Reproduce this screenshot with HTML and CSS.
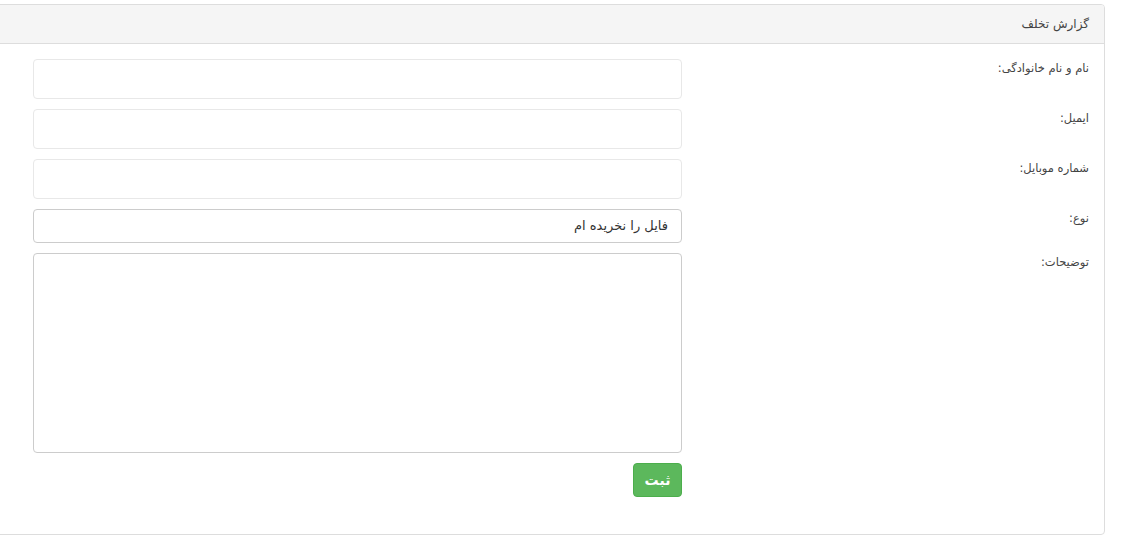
FILE: index.html
```html
<!DOCTYPE html>
<html lang="fa" dir="rtl">
<head>
<meta charset="utf-8">
<title>گزارش تخلف</title>
<link rel="stylesheet" href="styles.css">
</head>
<body>
<div class="panel">
  <div class="panel-heading">گزارش تخلف</div>
  <div class="panel-body">
    <form class="form">
      <label class="label">نام و نام خانوادگی:</label>
      <div class="control"><input class="input" type="text"></div>

      <label class="label">ایمیل:</label>
      <div class="control"><input class="input" type="text"></div>

      <label class="label">شماره موبایل:</label>
      <div class="control"><input class="input" type="text"></div>

      <label class="label">نوع:</label>
      <div class="control"><div class="select">فایل را نخریده ام</div></div>

      <label class="label">توضیحات:</label>
      <div class="control"><textarea class="textarea"></textarea></div>

      <div class="spacer"></div>
      <div class="control actions"><button class="btn" type="button">ثبت</button></div>
    </form>
  </div>
</div>
</body>
</html>
```

FILE: styles.css
```css
html, body {
  margin: 0;
  padding: 0;
  background: #fff;
}
body {
  font-family: "DejaVu Sans", sans-serif;
  color: #333;
  overflow: hidden;
}
.panel {
  margin: 4px 16px 0 -10px;
  border: 1px solid #ddd;
  border-radius: 4px;
  background: #fff;
}
.panel-heading {
  height: 39px;
  box-sizing: border-box;
  padding: 10px 15px 0 15px;
  background: #f5f5f5;
  border-bottom: 1px solid #ddd;
  border-radius: 3px 3px 0 0;
  font-size: 12px;
  line-height: 18px;
  color: #444;
}
.panel-body {
  padding: 15px 15px 37px 42px;
}
.form {
  display: grid;
  grid-template-columns: 1fr 649px;
  row-gap: 10px;
  column-gap: 15px;
}
.label {
  font-size: 11.5px;
  line-height: 16px;
  padding-top: 1px;
  color: #444;
  text-align: right;
}
.control {
  display: flex;
}
.input {
  width: 100%;
  height: 40px;
  box-sizing: border-box;
  border: 1px solid #e8e8e8;
  border-radius: 4px;
  background: #fff;
  margin: 0;
  font-family: inherit;
}
.select {
  width: 100%;
  height: 34px;
  box-sizing: border-box;
  border: 1px solid #ccc;
  border-radius: 4px;
  padding: 0 13px;
  font-size: 13px;
  line-height: 31px;
  color: #333;
}
.textarea {
  width: 100%;
  height: 200px;
  box-sizing: border-box;
  border: 1px solid #ccc;
  border-radius: 4px;
  margin: 0;
  resize: none;
  font-family: inherit;
}
.actions {
  justify-content: flex-start;
}
.btn {
  width: 49px;
  height: 34px;
  margin-top: 0;
  background: #5cb85c;
  border: 1px solid #4cae4c;
  border-radius: 4px;
  color: #fff;
  font-family: "DejaVu Sans", sans-serif;
  font-weight: bold;
  font-size: 14px;
  padding: 0;
}
```
